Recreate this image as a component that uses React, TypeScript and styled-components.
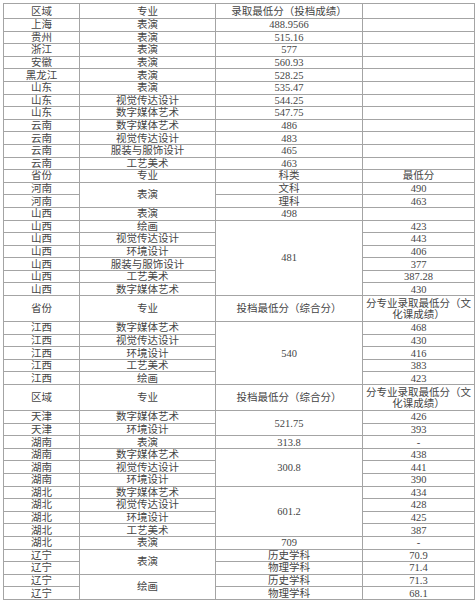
import React from "react";
import styled, { createGlobalStyle } from "styled-components";

const Global = createGlobalStyle`
  html, body { margin: 0; padding: 0; background: #ffffff; }
`;

const Page = styled.div`
  padding: 3px 0 0 3px;
  background: #ffffff;
`;

const Table = styled.table`
  border-collapse: collapse;
  table-layout: fixed;
  width: 471px;
`;

const Col = styled.col<{ $w: number }>`
  width: ${(p) => p.$w}px;
`;

const Row = styled.tr<{ $h: number }>`
  height: ${(p) => p.$h}px;
`;

const Cell = styled.td`
  border: 1px solid #a4a4a4;
  background: #ffffff;
  padding: 0;
  text-align: center;
  vertical-align: middle;
  font-size: 10.5px;
  line-height: 11px;
  color: #454545;
  font-family: "Liberation Serif", "Noto Sans CJK SC", serif;
`;

type C = { t: string; rs?: number; br?: boolean };
const c = (t: string, rs?: number): C => ({ t, rs });

const H2: C = { t: "分专业录取最低分（文|化课成绩）", br: true };

const rows: C[][] = [
  [c("区域"), c("专业"), c("录取最低分（投档成绩）"), c("")],
  [c("上海"), c("表演"), c("488.9566"), c("")],
  [c("贵州"), c("表演"), c("515.16"), c("")],
  [c("浙江"), c("表演"), c("577"), c("")],
  [c("安徽"), c("表演"), c("560.93"), c("")],
  [c("黑龙江"), c("表演"), c("528.25"), c("")],
  [c("山东"), c("表演"), c("535.47"), c("")],
  [c("山东"), c("视觉传达设计"), c("544.25"), c("")],
  [c("山东"), c("数字媒体艺术"), c("547.75"), c("")],
  [c("云南"), c("数字媒体艺术"), c("486"), c("")],
  [c("云南"), c("视觉传达设计"), c("483"), c("")],
  [c("云南"), c("服装与服饰设计"), c("465"), c("")],
  [c("云南"), c("工艺美术"), c("463"), c("")],
  [c("省份"), c("专业"), c("科类"), c("最低分")],
  [c("河南"), c("表演", 2), c("文科"), c("490")],
  [c("河南"), c("理科"), c("463")],
  [c("山西"), c("表演"), c("498"), c("")],
  [c("山西"), c("绘画"), c("481", 6), c("423")],
  [c("山西"), c("视觉传达设计"), c("443")],
  [c("山西"), c("环境设计"), c("406")],
  [c("山西"), c("服装与服饰设计"), c("377")],
  [c("山西"), c("工艺美术"), c("387.28")],
  [c("山西"), c("数字媒体艺术"), c("430")],
  [c("省份"), c("专业"), c("投档最低分（综合分）"), H2],
  [c("江西"), c("数字媒体艺术"), c("540", 5), c("468")],
  [c("江西"), c("视觉传达设计"), c("430")],
  [c("江西"), c("环境设计"), c("416")],
  [c("江西"), c("工艺美术"), c("383")],
  [c("江西"), c("绘画"), c("423")],
  [c("区域"), c("专业"), c("投档最低分（综合分）"), H2],
  [c("天津"), c("数字媒体艺术"), c("521.75", 2), c("426")],
  [c("天津"), c("环境设计"), c("393")],
  [c("湖南"), c("表演"), c("313.8"), c("-")],
  [c("湖南"), c("数字媒体艺术"), c("300.8", 3), c("438")],
  [c("湖南"), c("视觉传达设计"), c("441")],
  [c("湖南"), c("环境设计"), c("390")],
  [c("湖北"), c("数字媒体艺术"), c("601.2", 4), c("434")],
  [c("湖北"), c("视觉传达设计"), c("428")],
  [c("湖北"), c("环境设计"), c("425")],
  [c("湖北"), c("工艺美术"), c("387")],
  [c("湖北"), c("表演"), c("709"), c("-")],
  [c("辽宁"), c("表演", 2), c("历史学科"), c("70.9")],
  [c("辽宁"), c("物理学科"), c("71.4")],
  [c("辽宁"), c("绘画", 2), c("历史学科"), c("71.3")],
  [c("辽宁"), c("物理学科"), c("68.1")],
];

const heightOf = (i: number) => (i === 0 ? 15 : i === 23 || i === 29 ? 26 : 12.6);

export default function App() {
  return (
    <Page>
      <Global />
      <Table>
        <colgroup>
          <Col $w={76} />
          <Col $w={136} />
          <Col $w={147} />
          <Col $w={112} />
        </colgroup>
        <tbody>
          {rows.map((r, i) => (
            <Row key={i} $h={heightOf(i)}>
              {r.map((cell, j) => (
                <Cell key={j} rowSpan={cell.rs}>
                  {cell.br ? (
                    <>
                      {cell.t.split("|")[0]}
                      <br />
                      {cell.t.split("|")[1]}
                    </>
                  ) : (
                    cell.t
                  )}
                </Cell>
              ))}
            </Row>
          ))}
        </tbody>
      </Table>
    </Page>
  );
}
